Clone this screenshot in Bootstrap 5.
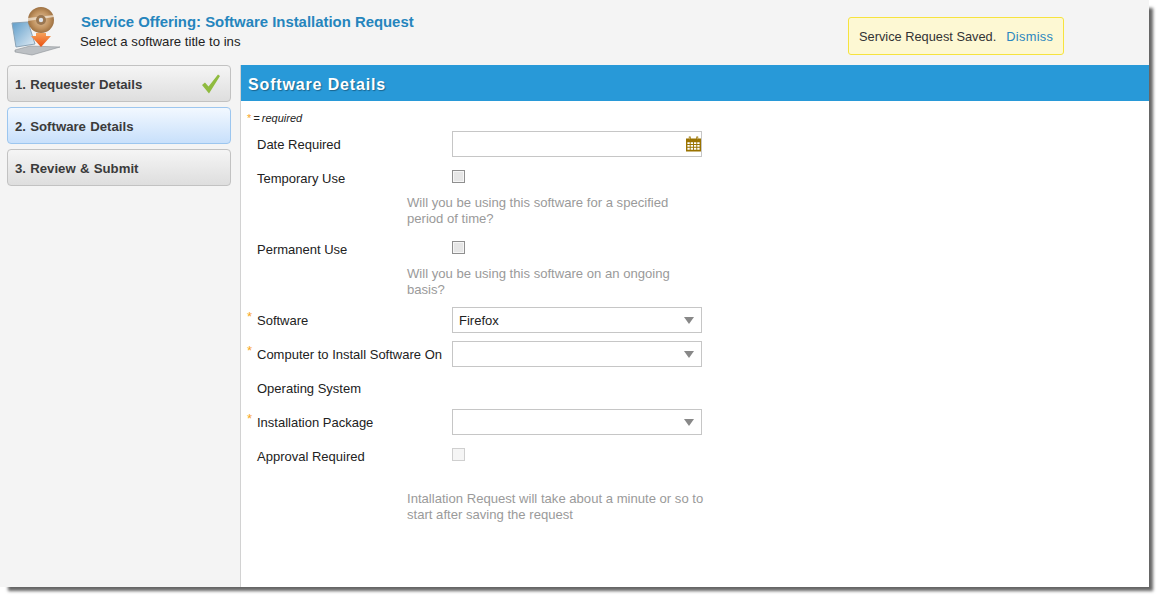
<!DOCTYPE html>
<html lang="en">
<head>
<meta charset="utf-8">
<title>Software Installation Request</title>
<link rel="stylesheet" href="https://cdn.jsdelivr.net/npm/bootstrap@5.3.0/dist/css/bootstrap.min.css">
<style>
html, body { height: 100%; background: #fff; overflow: hidden; }
body { font-family: "Liberation Sans", Arial, sans-serif; font-size: 13px; color: #222; }
.app-window { width: 1149px; height: 587px; background: #f4f4f4; box-shadow: 6px 6px 3px -2px #666; }
.app-head { height: 65px; }
.app-logo { width: 52px; height: 52px; margin: 4px 0 0 10px; }
.app-titles { margin: 14px 0 0 18px; line-height: 17px; }
.app-title { font-size: 14.9px; font-weight: 700; color: #2585bd; margin: 0 0 2px 1px; line-height: 17px; }
.app-sub { font-size: 13.2px; color: #222; line-height: 18px; }
.saved-note { width: 216px; height: 38px; margin: 17px 85px 0 0; background: #fdf8d3; border: 1px solid #f6e33e; border-radius: 3px; padding: 1px 0 0 10px; font-size: 12.8px; color: #333; white-space: nowrap; }
.saved-note a { color: #2a87c0; text-decoration: none; margin-left: 10px; letter-spacing: .3px; }
.app-body { height: 522px; }
.side-col { width: 241px; border-right: 1px solid #d2d2d2; padding: 0 9px 0 7px; gap: 5px; }
.step-btn { height: 37px; padding: 2px 9px 0 7px; border: 1px solid #c2c2c2; border-radius: 4px; background: linear-gradient(#f5f5f5, #dedede); color: #3b3b3b; font-size: 13.2px; font-weight: 700; word-spacing: .6px; }
.step-btn.step-on { background: linear-gradient(#f2f8ff, #c8e0fb); border-color: #9cc6ef; }
.step-btn svg { margin-top: -2px; }
.main-col { background: #fff; width: 908px; }
.main-bar { height: 36px; background: #2899d8; color: #fff; font-size: 16px; font-weight: 700; padding: 3px 0 0 7px; text-shadow: 1px 1px 1px rgba(0,0,0,.35); letter-spacing: .85px; }
.form-wrap { padding: 0 0 0 6px; }
.req-key { font-size: 11px; font-style: italic; height: 30px; padding-top: 10px; line-height: 14px; color: #222; word-spacing: -1px; }
.req-star { color: #f8a51c; font-style: normal; }
.field-row { height: 34px; }
.field-star { width: 10px; color: #f8a51c; font-size: 13px; line-height: 20px; }
.field-label { width: 195px; font-size: 13px; line-height: 28px; color: #222; white-space: nowrap; }
.field-ctl { width: 250px; }
.form-control.field-input, .form-select.field-input { width: 250px; height: 26px; min-height: 26px; padding: 1px 6px 0; font-size: 13px; border: 1px solid #c6c6c6; border-radius: 0; color: #222; box-shadow: none; }
.form-select.field-input { background-image: url("data:image/svg+xml,%3csvg xmlns='http://www.w3.org/2000/svg' viewBox='0 0 10 7'%3e%3cpath fill='%23888' d='M0 0h10L5 7z'/%3e%3c/svg%3e"); background-size: 10px 7px; background-position: right 7px center; }
.cal-icon { position: absolute; right: 1px; top: 5px; width: 15px; height: 16px; }
.form-check-input.plain-box { width: 13px; height: 13px; margin: 5px 0 0 0; border: 1px solid #8f8f8f; border-radius: 0; background-color: #e6e6e6; box-shadow: inset 0 0 0 1px #f6f6f6; opacity: 1; }
.form-check-input.plain-box:disabled { border-color: #cfcfcf; background-color: #f5f5f5; box-shadow: none; opacity: 1; }
.help-note { margin: -4px 0 0 160px; width: 298px; font-size: 13.1px; line-height: 16px; color: #9a9a9a; height: 41px; }
.help-note.help-last { margin-top: 14px; }
</style>
</head>
<body>
<div class="app-window d-flex flex-column">
  <header class="app-head d-flex">
    <svg class="app-logo flex-shrink-0" viewBox="0 0 52 52" aria-hidden="true">
      <defs>
        <linearGradient id="scr" x1="0" y1="0" x2="1" y2="1"><stop offset="0" stop-color="#5d9cc9"/><stop offset="1" stop-color="#e3edf5"/></linearGradient>
        <linearGradient id="arw" x1="0" y1="0" x2="0" y2="1"><stop offset="0" stop-color="#f6a25a"/><stop offset="1" stop-color="#ea4f10"/></linearGradient>
        <radialGradient id="dsk" cx=".5" cy=".5" r=".55"><stop offset="0" stop-color="#e2c4a0"/><stop offset=".6" stop-color="#c0925f"/><stop offset="1" stop-color="#94683a"/></radialGradient>
      </defs>
      <path d="M2 19l16-1 7 22-19 3z" fill="url(#scr)" stroke="#8aa3b6" stroke-width="1"/>
      <path d="M5 46l15-4 30 1-28 8-17-3z" fill="#bcc0c4" stroke="#8c9196" stroke-width=".6"/>
      <circle cx="31" cy="16" r="13" fill="url(#dsk)"/>
      <path d="M18 14l26-3 0 2-26 4z" fill="#f4e8d8" opacity=".75"/>
      <circle cx="31" cy="16" r="5" fill="#9a7650"/>
      <circle cx="31" cy="16" r="2.200" fill="#dfe6ee"/>
      <path d="M26 29h10v3h5L31 43 21 32h5z" fill="url(#arw)"/>
    </svg>
    <div class="app-titles flex-grow-1">
      <h1 class="app-title">Service Offering: Software Installation Request</h1>
      <div class="app-sub">Select a software title to ins</div>
    </div>
    <div class="saved-note d-flex align-items-center">
      <span>Service Request Saved.</span><a href="#">Dismiss</a>
    </div>
  </header>
  <div class="app-body d-flex">
    <nav class="side-col d-flex flex-column flex-shrink-0">
      <div class="step-btn d-flex align-items-center justify-content-between">
        <span>1. Requester Details</span>
        <svg width="20" height="20" viewBox="0 0 20 20" aria-hidden="true"><path d="M1 11l3-2.500 3.500 4L17 .5l2 1.500L8 19.500z" fill="#8fbb3f"/></svg>
      </div>
      <div class="step-btn step-on d-flex align-items-center"><span>2. Software Details</span></div>
      <div class="step-btn d-flex align-items-center"><span>3. Review &amp; Submit</span></div>
    </nav>
    <main class="main-col flex-grow-1">
      <div class="main-bar d-flex align-items-center">Software Details</div>
      <div class="form-wrap">
        <div class="req-key"><span class="req-star">*</span> = required</div>
        <div class="field-row d-flex">
          <span class="field-star"></span><label class="field-label">Date Required</label>
          <div class="field-ctl position-relative">
            <input type="text" class="form-control field-input">
            <svg class="cal-icon" viewBox="0 0 16 16" aria-hidden="true"><path fill="#9a7300" d="M3 0h2v2h6V0h2v2h3v14H0V2h3z"/><path fill="#fff" d="M3.800.8h.4v2.200h-.4zM11.800.8h.4v2.200h-.4zM1.500 6h2.500v2H1.500zM5 6h2.500v2H5zM8.500 6H11v2H8.500zM12 6h2.500v2H12zM1.500 9h2.500v2H1.500zM5 9h2.500v2H5zM8.500 9H11v2H8.500zM12 9h2.500v2H12zM1.500 12h2.500v2H1.500zM5 12h2.500v2H5zM8.500 12H11v2H8.500zM12 12h2.500v2H12z"/></svg>
          </div>
        </div>
        <div class="field-row d-flex">
          <span class="field-star"></span><label class="field-label">Temporary Use</label>
          <div class="field-ctl"><input type="checkbox" class="form-check-input plain-box"></div>
        </div>
        <div class="help-note">Will you be using this software for a specified period of time?</div>
        <div class="field-row d-flex">
          <span class="field-star"></span><label class="field-label">Permanent Use</label>
          <div class="field-ctl"><input type="checkbox" class="form-check-input plain-box"></div>
        </div>
        <div class="help-note">Will you be using this software on an ongoing basis?</div>
        <div class="field-row d-flex">
          <span class="field-star">*</span><label class="field-label">Software</label>
          <div class="field-ctl"><select class="form-select field-input"><option>Firefox</option></select></div>
        </div>
        <div class="field-row d-flex">
          <span class="field-star">*</span><label class="field-label">Computer to Install Software On</label>
          <div class="field-ctl"><select class="form-select field-input"><option></option></select></div>
        </div>
        <div class="field-row d-flex">
          <span class="field-star"></span><label class="field-label">Operating System</label>
          <div class="field-ctl"></div>
        </div>
        <div class="field-row d-flex">
          <span class="field-star">*</span><label class="field-label">Installation Package</label>
          <div class="field-ctl"><select class="form-select field-input"><option></option></select></div>
        </div>
        <div class="field-row d-flex">
          <span class="field-star"></span><label class="field-label">Approval Required</label>
          <div class="field-ctl"><input type="checkbox" class="form-check-input plain-box" disabled></div>
        </div>
        <div class="help-note help-last">Intallation Request will take about a minute or so to start after saving the request</div>
      </div>
    </main>
  </div>
</div>
<script src="https://cdn.jsdelivr.net/npm/bootstrap@5.3.0/dist/js/bootstrap.bundle.min.js"></script>
</body>
</html>
